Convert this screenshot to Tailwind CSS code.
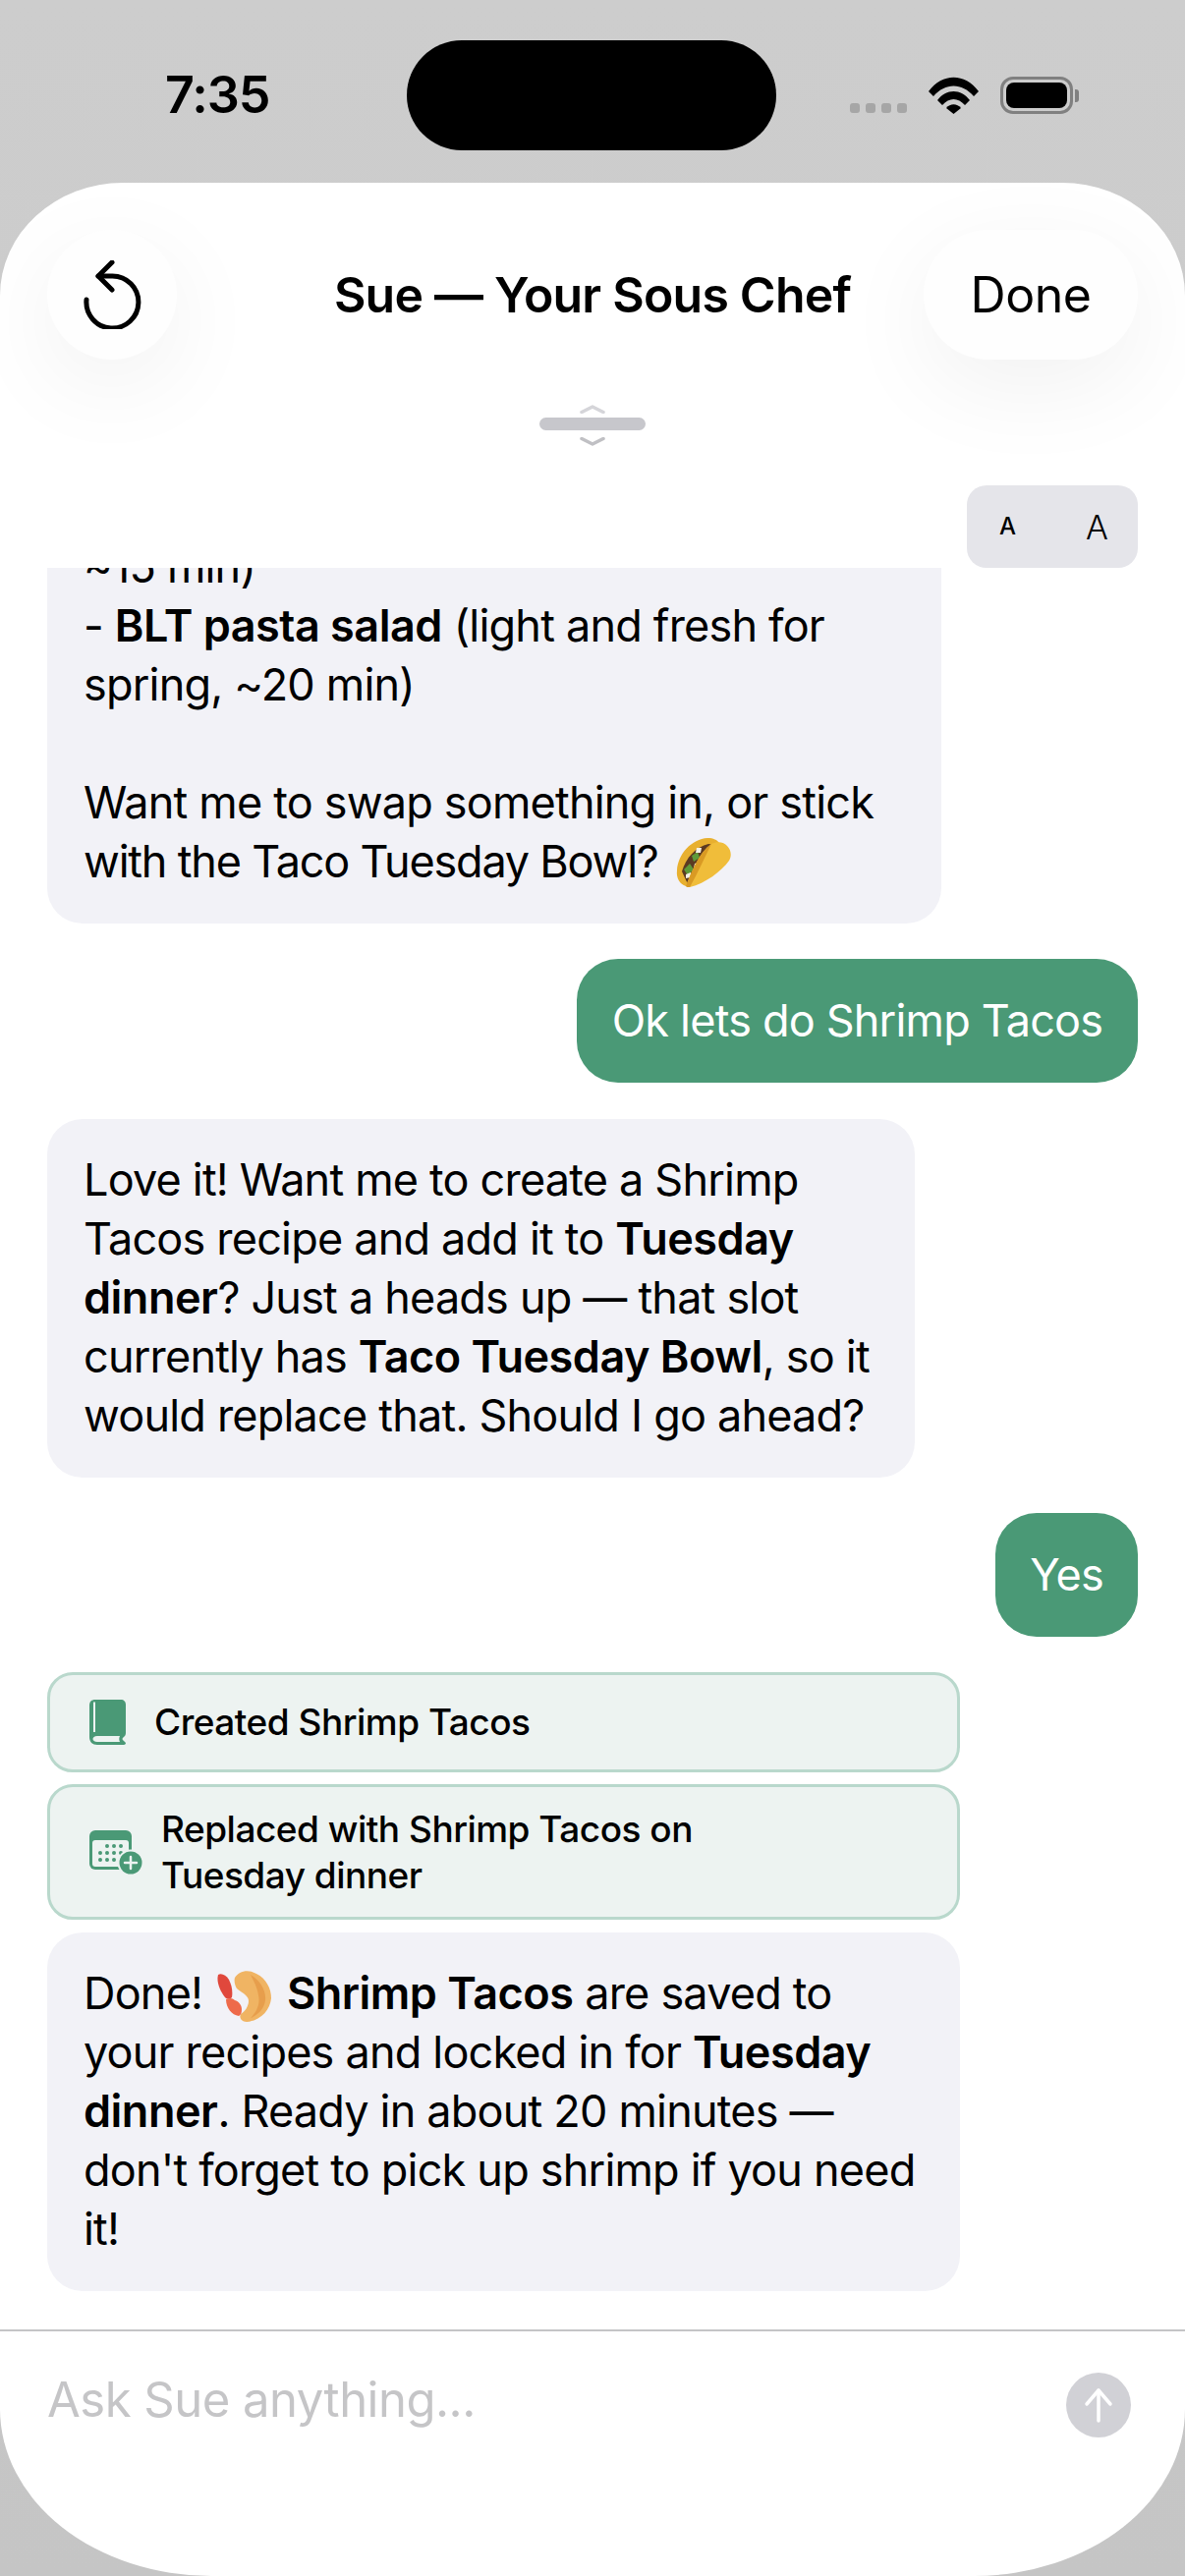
<!DOCTYPE html>
<html lang="en">
<head>
    <meta charset="UTF-8">
    <title>Sue — Your Sous Chef</title>
    <script src="https://cdn.jsdelivr.net/npm/@tailwindcss/browser@4"></script>
</head>
<body class="w-[1206px] h-[2622px] overflow-hidden bg-gradient-to-b from-[#cdcdcd] to-[#c5c5c5] font-['Inter','Liberation_Sans',sans-serif] text-black flex flex-col">

    <!-- Status bar -->
    <div class="h-[186px] shrink-0 flex items-start">
        <div class="w-[414px] pt-[66px] pl-[168px] text-[52px] leading-[62px] font-semibold tracking-[-1px]">7:35</div>
        <div class="w-[376px] h-[112px] mt-[41px] bg-black rounded-[56px]"></div>
        <div class="flex items-end pt-[78px] pl-[75px]">
            <div class="flex gap-[6px] mb-[1px]">
                <span class="w-[10px] h-[10px] rounded-[3px] bg-[#a6a6a6]"></span>
                <span class="w-[10px] h-[10px] rounded-[3px] bg-[#a6a6a6]"></span>
                <span class="w-[10px] h-[10px] rounded-[3px] bg-[#a6a6a6]"></span>
                <span class="w-[10px] h-[10px] rounded-[3px] bg-[#a6a6a6]"></span>
            </div>
            <svg class="ml-[22px]" width="51" height="38" viewBox="0 0 51 38">
                <path d="M0 15 C14 -4 37 -4 51 15 L46 20 C34 6 17 6 5 20 Z" fill="#000"/>
                <path d="M9 24 C18 12 33 12 42 24 L37 29 C30 21 21 21 14 29 Z" fill="#000"/>
                <path d="M18 32 C22 27 29 27 33 32 L25.500 38 Z" fill="#000"/>
            </svg>
            <div class="ml-[22px] w-[74px] h-[38px] rounded-[13px] border-[3px] border-[#808080] p-[3px]">
                <div class="w-full h-full rounded-[8px] bg-black"></div>
            </div>
            <div class="ml-[2px] mb-[12px] w-[4px] h-[13px] rounded-r-[3px] bg-[#808080]"></div>
        </div>
    </div>

    <!-- Sheet -->
    <div class="flex-1 min-h-0 bg-white flex flex-col rounded-t-[125px_115px] rounded-b-[215px_170px]">

        <!-- Header -->
        <div class="relative h-[308px] shrink-0 px-[48px] pt-[48px] flex items-start justify-between">
            <button class="w-[132px] h-[132px] rounded-full bg-[#fefefe] shadow-[0_26px_100px_rgba(0,0,0,0.06)] flex items-center justify-center">
                <svg width="60" height="70" viewBox="0 0 60 70" fill="none" stroke="#000" stroke-width="5" stroke-linecap="round" stroke-linejoin="round">
                    <path d="M4 40 A26.500 26.500 0 1 0 30 16 L16 16"/>
                    <path d="M30 2 L16 16 L30 30"/>
                </svg>
            </button>
            <h1 class="absolute left-0 right-0 top-[84px] text-center text-[50px] leading-[60px] font-semibold tracking-[-0.8px]">Sue — Your Sous Chef</h1>
            <button class="w-[218px] h-[132px] rounded-[66px] bg-[#fefefe] shadow-[0_26px_100px_rgba(0,0,0,0.06)] text-[50px] leading-[60px] tracking-[-0.5px]">Done</button>

            <!-- Drag handle -->
            <div class="absolute left-[549px] top-[226px] flex flex-col items-center w-[108px]">
                <svg width="26" height="9" viewBox="0 0 26 9" fill="none"><path d="M2 7.500 L13 2 L24 7.500" stroke="#d5d5d9" stroke-width="3.500" stroke-linecap="round" stroke-linejoin="round"/></svg>
                <div class="w-[108px] h-[13px] mt-[4px] rounded-[7px] bg-[#c7c7cc]"></div>
                <svg class="mt-[7px]" width="26" height="9" viewBox="0 0 26 9" fill="none"><path d="M2 1.500 L13 7 L24 1.500" stroke="#c0c0c4" stroke-width="3.500" stroke-linecap="round" stroke-linejoin="round"/></svg>
            </div>
        </div>

        <!-- Text size control + messages -->
        <div class="relative h-[84px] shrink-0">
            <div class="absolute right-[48px] top-0 w-[174px] h-[84px] rounded-[20px] bg-[#e5e5ea] flex items-center justify-between pl-[33px] pr-[30px]">
                <span class="text-[24px] font-medium">A</span>
                <span class="text-[34px] font-light">A</span>
            </div>
        </div>

        <div class="flex-1 min-h-0 overflow-hidden flex flex-col justify-end px-[48px] pb-[39px] text-[45px] leading-[60px] tracking-[-0.8px] whitespace-nowrap">
            <div class="w-[910px] shrink-0 bg-[#f2f2f7] rounded-[36px] px-[37px] pt-[32px] pb-[33px]">
                ~15 min)<br>
                - <b class="font-semibold tracking-[-0.5px]">BLT pasta salad</b> (light and fresh for<br>
                spring, ~20 min)<br>
                <br>
                Want me to swap something in, or stick<br>
                <span class="tracking-[-1.2px]">with the Taco Tuesday Bowl?</span>
                <svg class="inline-block align-[-10px] ml-[6px]" width="56" height="50" viewBox="0 0 56 50">
                    <path d="M1 33 C2 16 16 1 32 0 C38 0 42 2 44 5 L14 49 L10 49 C4 47 0 41 1 33 Z" fill="#e8b02f"/>
                    <path d="M6 34 C10 20 20 9 33 6 L44 8 L26 42 L12 47 Z" fill="#5c3a22"/>
                    <path d="M8 32 L14 26 L18 32 L12 38 Z M16 18 L22 14 L24 20 L18 24 Z M24 26 L30 22 L30 30 L25 33 Z M12 44 L18 38 L20 44 Z" fill="#5e9a3a"/>
                    <path d="M10 37 L15 35 L15 40 L10 41 Z M19 26 L23 25 L22 31 L18 31 Z M21 10 L26 10 L25 15 L20 15 Z" fill="#f4f1e8"/>
                    <path d="M10 49 C16 34 24 14 36 6 C42 3 49 4 52 8 C56 12 57 18 54 23 C46 34 30 46 14 50 C12 50 11 50 10 49 Z" fill="#f0bd3a"/>
                    <path d="M10 49 C16 34 24 14 36 6 C30 18 22 36 14 50 C12 50 11 50 10 49 Z" fill="#d99a24"/>
                </svg>
            </div>

            <div class="self-end shrink-0 mt-[36px] h-[126px] w-[571px] bg-[#4a9976] text-white rounded-[42px] flex items-center justify-center">Ok lets do Shrimp Tacos</div>

            <div class="w-[883px] shrink-0 mt-[37px] bg-[#f2f2f7] rounded-[36px] px-[37px] pt-[32px] pb-[33px]">
                Love it! Want me to create a Shrimp<br>
                Tacos recipe and add it to <b class="font-semibold tracking-[-0.5px]">Tuesday</b><br>
                <b class="font-semibold tracking-[-0.5px]">dinner</b>? Just a heads up — that slot<br>
                currently has <b class="font-semibold tracking-[-0.5px]">Taco Tuesday Bowl</b>, so it<br>
                would replace that. Should I go ahead?
            </div>

            <div class="self-end shrink-0 mt-[36px] h-[126px] w-[145px] bg-[#4a9976] text-white rounded-[42px] flex items-center justify-center">Yes</div>

            <!-- Action cards -->
            <div class="w-[929px] h-[102px] shrink-0 mt-[36px] bg-[#edf3f1] border-[3px] border-[#b9d8cc] rounded-[26px] flex items-center pl-[40px] gap-[29px] text-[37px] leading-[48px] font-medium tracking-[-0.5px]">
                <svg width="37" height="46" viewBox="0 0 37 46">
                    <path d="M6 0 H32 C35 0 37 2 37 5 V34 C37 36 36 37 35 38 C33 39 33 41 35 42 L37 44 C37 45 36 46 35 46 H8 C3 46 0 43 0 38 V6 C0 2 2 0 6 0 Z" fill="#4a9976"/>
                    <path d="M5 2.500 V33" stroke="#edf3f1" stroke-width="2"/>
                    <path d="M8 37 H31 C30 39 30 41 31 43 H8 C5 43 3.500 41.500 3.500 40 C3.500 38.500 5 37 8 37 Z" fill="#edf3f1"/>
                </svg>
                <span>Created Shrimp Tacos</span>
            </div>
            <div class="w-[929px] h-[138px] shrink-0 mt-[12px] bg-[#edf3f1] border-[3px] border-[#b9d8cc] rounded-[26px] flex items-center pl-[40px] gap-[19px] text-[37px] leading-[47px] font-medium tracking-[-0.5px]">
                <svg width="54" height="45" viewBox="0 0 54 45">
                    <rect x="0" y="0" width="43" height="40" rx="6" fill="#4a9976"/>
                    <rect x="3" y="10" width="37" height="27" rx="3" fill="#edf3f1"/>
                    <g fill="#4a9976">
                        <circle cx="18" cy="16" r="2"/><circle cx="25" cy="16" r="2"/><circle cx="32" cy="16" r="2"/>
                        <circle cx="11" cy="23" r="2"/><circle cx="18" cy="23" r="2"/><circle cx="25" cy="23" r="2"/><circle cx="32" cy="23" r="2"/>
                        <circle cx="11" cy="30" r="2"/><circle cx="18" cy="30" r="2"/><circle cx="25" cy="30" r="2"/>
                    </g>
                    <circle cx="42" cy="33" r="13.500" fill="#edf3f1"/>
                    <circle cx="42" cy="33" r="11.500" fill="#4a9976"/>
                    <path d="M42 27 V39 M36 33 H48" stroke="#edf3f1" stroke-width="2.500" stroke-linecap="round"/>
                </svg>
                <span>Replaced with Shrimp Tacos on<br>Tuesday dinner</span>
            </div>

            <div class="w-[929px] shrink-0 mt-[13px] bg-[#f2f2f7] rounded-[36px] px-[37px] pt-[32px] pb-[33px]">
                Done!
                <svg class="inline-block align-[-13px] ml-[3px] mr-[4px]" width="55" height="54" viewBox="0 0 55 54">
                    <path d="M18 9 C22 2 32 0 40 5 C50 10 55 20 55 30 C54 42 44 53 30 54 C25 54 22 50 24 46 C28 44 32 38 32 33 C32 27 26 25 20 20 C18 17 17 12 18 9 Z" fill="#f0b463"/>
                    <path d="M34 6 C44 12 50 22 49 32 C48 40 42 47 34 50 C40 44 44 36 42 27 C41 19 37 12 34 6 Z" fill="#e79e4c"/>
                    <path d="M1 6 C4 4 9 6 12 11 C15 17 16 23 15 29 C13 31 10 31 8 29 C3 23 -1 13 1 6 Z" fill="#e0483c"/>
                    <path d="M9 31 C13 29 16 30 18 32 C22 33 25 37 25 41 C25 45 24 47 22 48 C15 47 9 40 9 31 Z" fill="#ee6a4a"/>
                </svg>
                <b class="font-semibold tracking-[-0.5px]">Shrimp Tacos</b> are saved to<br>
                your recipes and locked in for <b class="font-semibold tracking-[-0.5px]">Tuesday</b><br>
                <b class="font-semibold tracking-[-0.5px]">dinner</b>. Ready in about 20 minutes —<br>
                don't forget to pick up shrimp if you need<br>
                it!
            </div>
        </div>

        <!-- Input bar -->
        <div class="h-[251px] shrink-0 border-t-[2px] border-[#c4c4c6] px-[48px] flex items-start justify-between pt-[42px]">
            <span class="text-[49px] leading-[56px] text-[#c5c5c7] tracking-[-0.5px]">Ask Sue anything...</span>
            <div class="w-[66px] h-[66px] mr-[7px] rounded-full bg-[#d1d1d6] flex items-center justify-center">
                <svg width="30" height="36" viewBox="0 0 30 36" fill="none" stroke="#fff" stroke-width="3.500" stroke-linecap="round" stroke-linejoin="round">
                    <path d="M15 34 V3"/><path d="M3 17 L15 3 L27 17"/>
                </svg>
            </div>
        </div>
    </div>
</body>
</html>
